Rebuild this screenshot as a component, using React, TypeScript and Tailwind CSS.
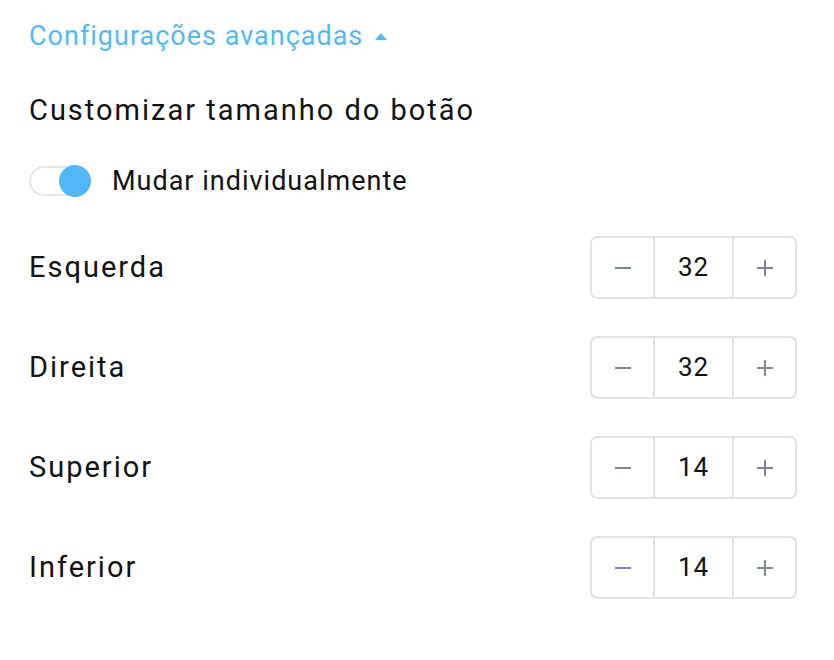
import React, { useState } from 'react';

const rowsInit = [
  { label: 'Esquerda', value: 32 },
  { label: 'Direita', value: 32 },
  { label: 'Superior', value: 14 },
  { label: 'Inferior', value: 14 },
];

const Stepper: React.FC<{ value: number; onChange: (v: number) => void }> = ({ value, onChange }) => (
  <div className="flex h-[63px] w-[207px] rounded-[7px] border-2 border-[#e2e2e2] bg-white">
    <button
      className="flex w-[63px] items-center justify-center border-r-2 border-[#e2e2e2]"
      onClick={() => onChange(value - 1)}
    >
      <svg width="16" height="2" viewBox="0 0 16 2">
        <rect width="16" height="2" fill="#7a8694" />
      </svg>
    </button>
    <div className="flex flex-1 items-center justify-center text-[26px] tracking-[1px] text-[#111]">{value}</div>
    <button
      className="flex w-[63px] items-center justify-center border-l-2 border-[#e2e2e2]"
      onClick={() => onChange(value + 1)}
    >
      <svg width="16" height="16" viewBox="0 0 16 16">
        <rect x="0" y="7" width="16" height="2" fill="#7a8694" />
        <rect x="7" y="0" width="2" height="16" fill="#7a8694" />
      </svg>
    </button>
  </div>
);

export default function App() {
  const [rows, setRows] = useState(rowsInit);
  const [individual, setIndividual] = useState(true);

  return (
    <div className="min-h-screen bg-white px-[29px] pt-[16px] font-['Roboto',sans-serif] text-[#111]">
      <button className="flex items-center gap-[12px] text-[27px] tracking-[1px] text-[#55b8f7]">
        Configurações avançadas
        <svg width="12" height="7" viewBox="0 0 12 7">
          <path d="M0 7 L6 0 L12 7 Z" fill="#55b8f7" />
        </svg>
      </button>

      <h2 className="mt-[33px] text-[29px] leading-[40px] tracking-[2px]">Customizar tamanho do botão</h2>

      <div className="mt-[31px] flex items-center gap-[21px]">
        <button
          className="relative h-[30px] w-[62px] rounded-full border-2 border-[#e6e6e6] bg-white"
          onClick={() => setIndividual(!individual)}
        >
          <span
            className={`absolute top-1/2 h-[32px] w-[32px] -translate-y-1/2 rounded-full bg-[#52b7fa] ${
              individual ? 'right-[-2px]' : 'left-[-2px]'
            }`}
          />
        </button>
        <span className="text-[27px] tracking-[1px]">Mudar individualmente</span>
      </div>

      <div className="mt-[35px] flex flex-col gap-[37px] pr-[8px]">
        {rows.map((r, i) => (
          <div key={r.label} className="flex items-center justify-between">
            <span className="text-[29px] tracking-[2px]">{r.label}</span>
            <Stepper
              value={r.value}
              onChange={(v) => setRows(rows.map((x, j) => (j === i ? { ...x, value: v } : x)))}
            />
          </div>
        ))}
      </div>
    </div>
  );
}
